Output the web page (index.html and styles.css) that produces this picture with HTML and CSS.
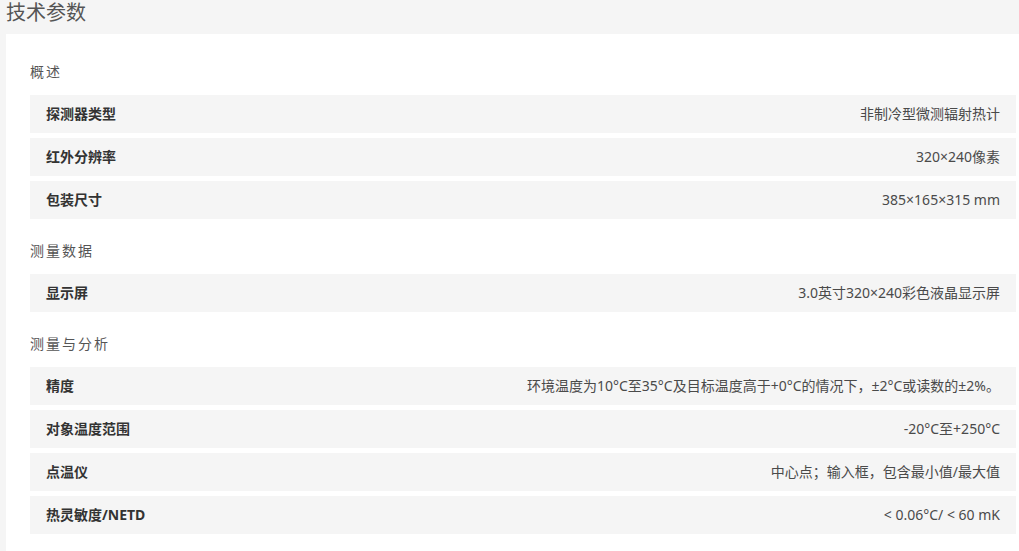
FILE: index.html
```html
<!DOCTYPE html>
<html lang="zh-CN">
<head>
  <meta charset="UTF-8"/>
  <meta name="viewport" content="width=device-width, initial-scale=1.0"/>
  <title>技术参数</title>
  <link rel="stylesheet" href="styles.css">
</head>
<body>

  <h1 class="page-title">技术参数</h1>

  <!-- Spec card -->
  <div class="spec-card">
    <h3 class="spec-group">概述</h3>
    <div class="spec-row"><span class="spec-name">探测器类型</span><span class="spec-value">非制冷型微测辐射热计</span></div>
    <div class="spec-row"><span class="spec-name">红外分辨率</span><span class="spec-value">320×240像素</span></div>
    <div class="spec-row"><span class="spec-name">包装尺寸</span><span class="spec-value">385×165×315 mm</span></div>

    <h3 class="spec-group">测量数据</h3>
    <div class="spec-row"><span class="spec-name">显示屏</span><span class="spec-value">3.0英寸320×240彩色液晶显示屏</span></div>

    <h3 class="spec-group">测量与分析</h3>
    <div class="spec-row"><span class="spec-name">精度</span><span class="spec-value">环境温度为10°C至35°C及目标温度高于+0°C的情况下，±2°C或读数的±2%。</span></div>
    <div class="spec-row"><span class="spec-name">对象温度范围</span><span class="spec-value">-20°C至+250°C</span></div>
    <div class="spec-row"><span class="spec-name">点温仪</span><span class="spec-value">中心点；输入框，包含最小值/最大值</span></div>
    <div class="spec-row"><span class="spec-name">热灵敏度/NETD</span><span class="spec-value">&lt; 0.06°C/ &lt; 60 mK</span></div>
  </div>

</body>
</html>
```

FILE: styles.css
```css
* {
  box-sizing: border-box;
}

body {
  margin: 0;
  font-family: "Noto Sans", "Noto Sans CJK SC", sans-serif;
  background-color: #f5f5f5;
  overflow: hidden;
}

.page-title {
  margin: 0 0 9px 6px;
  font-size: 20px;
  line-height: 25px;
  font-weight: normal;
  color: #555;
}

.spec-card {
  display: flex;
  flex-direction: column;
  margin-left: 6px;
  padding: 11px 3px 20px 24px;
  background-color: #fff;
}

.spec-group {
  margin: 17px 0 13px;
  font-size: 14px;
  line-height: 20px;
  font-weight: normal;
  letter-spacing: 2px;
  color: #555;
}

.spec-row {
  display: flex;
  justify-content: space-between;
  align-items: center;
  height: 38px;
  margin-bottom: 5px;
  padding: 0 16px 2px;
  background-color: #f5f5f5;
  font-size: 14px;
  color: #4a4a4a;
}

.spec-name {
  font-weight: bold;
  color: #333;
}

.spec-value {
  text-align: right;
}
```
